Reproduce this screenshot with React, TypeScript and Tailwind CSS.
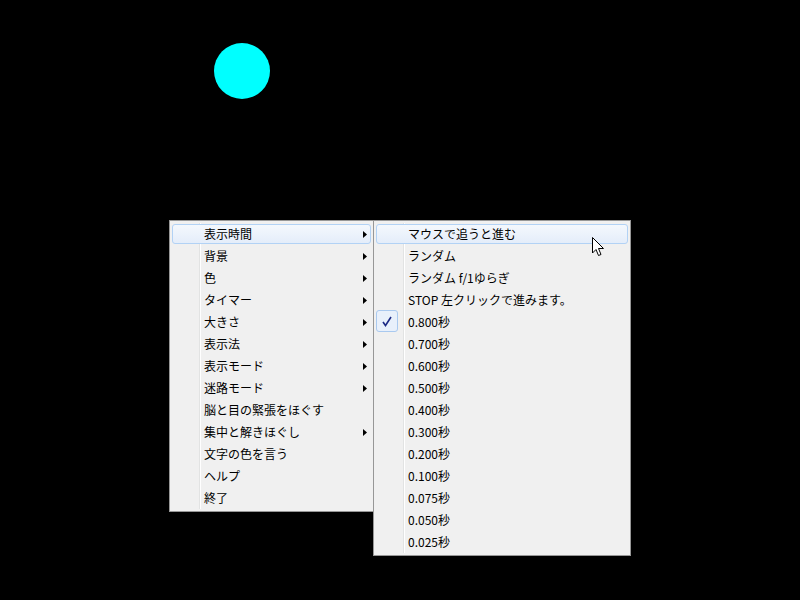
import React from 'react';

type Item = { label: string; sub?: boolean; active?: boolean; checked?: boolean };

const mainItems: Item[] = [
  { label: '表示時間', sub: true, active: true },
  { label: '背景', sub: true },
  { label: '色', sub: true },
  { label: 'タイマー', sub: true },
  { label: '大きさ', sub: true },
  { label: '表示法', sub: true },
  { label: '表示モード', sub: true },
  { label: '迷路モード', sub: true },
  { label: '脳と目の緊張をほぐす' },
  { label: '集中と解きほぐし', sub: true },
  { label: '文字の色を言う' },
  { label: 'ヘルプ' },
  { label: '終了' },
];

const timeItems: Item[] = [
  { label: 'マウスで追うと進む', active: true },
  { label: 'ランダム' },
  { label: 'ランダム f/1ゆらぎ' },
  { label: 'STOP 左クリックで進みます。' },
  { label: '0.800秒', checked: true },
  { label: '0.700秒' },
  { label: '0.600秒' },
  { label: '0.500秒' },
  { label: '0.400秒' },
  { label: '0.300秒' },
  { label: '0.200秒' },
  { label: '0.100秒' },
  { label: '0.075秒' },
  { label: '0.050秒' },
  { label: '0.025秒' },
];

const MenuRow: React.FC<{ item: Item }> = ({ item }) => (
  <div className="relative h-[22px] flex items-center">
    {item.active && (
      <div className="absolute inset-[1px] rounded-[3px] border border-[#b2d2f5] bg-gradient-to-b from-[#f4f8fd] to-[#e4edfa]" />
    )}
    <div className="relative w-[33px] h-full flex items-center justify-start pl-[1px] shrink-0">
      {item.checked && (
        <div className="w-[22px] h-[22px] -mt-[2px] rounded-[3px] border border-[#a9c9ef] bg-[#e8f0fb] flex items-center justify-center">
          <svg width="10" height="11" viewBox="0 0 10 11">
            <path d="M1 6 L3.5 9.5 L9 1" fill="none" stroke="#1c2a85" strokeWidth="1.6" />
          </svg>
        </div>
      )}
    </div>
    <span className="relative flex-1 -mt-[1px] text-[12px] text-black leading-[22px] whitespace-nowrap">
      {item.label}
    </span>
    {item.sub && (
      <svg className="relative mr-[5px] shrink-0" width="4" height="7" viewBox="0 0 4 7">
        <path d="M0 0 L4 3.5 L0 7 Z" fill="#000" />
      </svg>
    )}
  </div>
);

const Menu: React.FC<{ items: Item[]; width: string }> = ({ items, width }) => (
  <div className={`relative ${width} border border-[#979797] bg-[#f0f0f0] py-[2px] px-[1px]`}>
    {/* gutter separator */}
    <div className="absolute top-[2px] bottom-[2px] left-[29px] w-[2px] border-l border-l-[#e2e3e3] border-r border-r-white" />
    {items.map((it) => (
      <MenuRow key={it.label} item={it} />
    ))}
  </div>
);

const App: React.FC = () => {
  return (
    <div
      className="relative w-[800px] h-[600px] bg-black overflow-hidden"
      style={{ fontFamily: '"Noto Sans CJK JP", "Noto Sans", sans-serif' }}
    >
      <div className="absolute left-[214px] top-[43px] w-[56px] h-[56px] rounded-full bg-[#00ffff]" />
      <div className="absolute left-[169px] top-[220px] flex items-start">
        <Menu items={mainItems} width="w-[205px]" />
        <div className="-ml-[1px]">
          <Menu items={timeItems} width="w-[258px]" />
        </div>
      </div>
      <svg className="absolute left-[592px] top-[237px]" width="13" height="20" viewBox="0 0 13 20">
        <path
          d="M0.5 0.5 L0.5 16 L4 12.5 L6.5 18.5 L9 17.5 L6.5 11.5 L11.5 11.5 Z"
          fill="#fff"
          stroke="#000"
          strokeWidth="1"
          strokeLinejoin="round"
        />
      </svg>
    </div>
  );
};

export default App;
